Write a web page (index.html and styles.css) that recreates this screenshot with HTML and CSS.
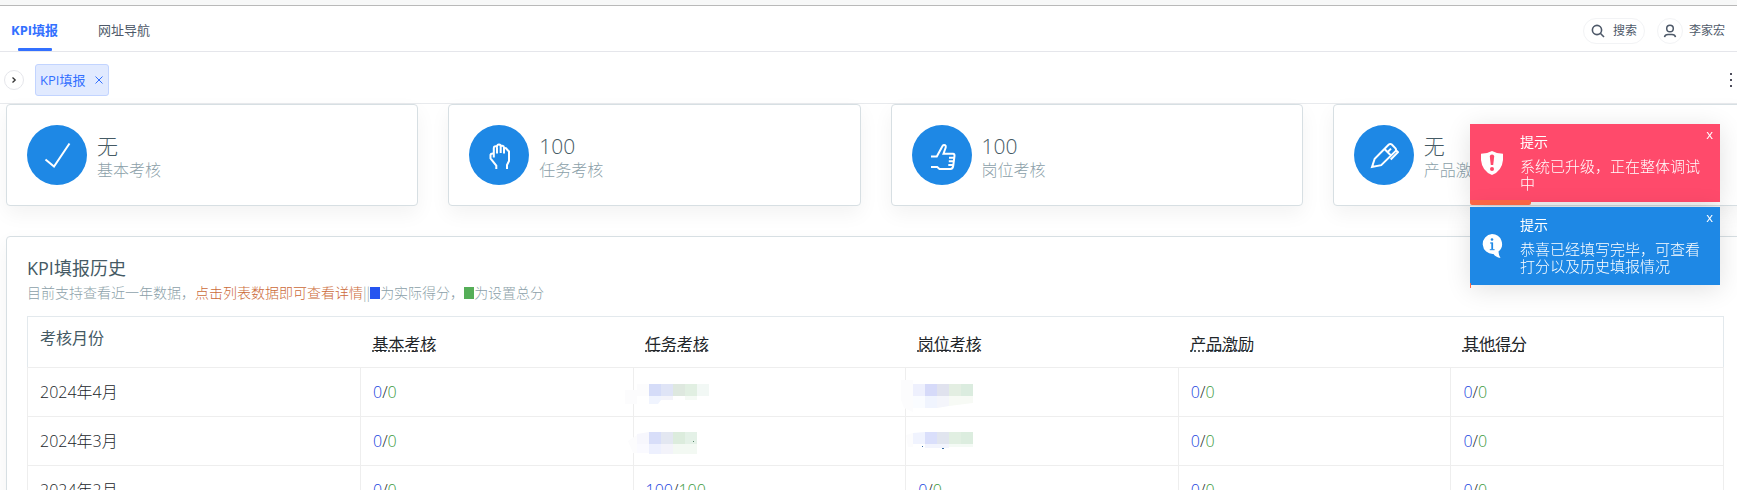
FILE: index.html
```html
<!DOCTYPE html>
<html lang="zh-CN">
<head>
    <meta charset="UTF-8">
    <meta name="viewport" content="width=device-width, initial-scale=1.0">
    <title>KPI填报</title>
    <link rel="stylesheet" href="styles.css">
</head>
<body>
    <div class="top-strip"></div>

    <header class="header">
        <nav class="nav">
            <a class="nav-link active" href="#">KPI填报</a>
            <a class="nav-link" href="#">网址导航</a>
        </nav>
        <div class="tools">
            <button class="search-button" type="button">
                <svg width="14" height="14" viewBox="0 0 14 14" fill="none" stroke="#4e5969" stroke-width="1.6"><circle cx="6" cy="6" r="4.6"/><path d="M9.3 9.3L13 13"/></svg>
                <span>搜索</span>
            </button>
            <button class="user-button" type="button">
                <span class="avatar">
                    <svg width="14" height="14" viewBox="0 0 14 14" fill="none" stroke="#4e5969" stroke-width="1.5"><circle cx="7" cy="4.5" r="3.3"/><path d="M1.5 13.200Q2 10.500 5 10.500H9Q12 10.500 12.500 13.200"/></svg>
                </span>
                <span class="user-name">李家宏</span>
            </button>
        </div>
    </header>

    <div class="tab-bar">
        <button class="expand-button" type="button" aria-label="展开">
            <svg width="6" height="8" viewBox="0 0 6 8" fill="none" stroke="#333" stroke-width="1.3"><path d="M1.5 1.500L4.200 4L1.500 6.500"/></svg>
        </button>
        <div class="tag">
            <a href="#">KPI填报</a>
            <button class="tag-close" type="button" aria-label="关闭">
                <svg width="8" height="8" viewBox="0 0 8 8" stroke="#3370ff" stroke-width="1"><path d="M.5.5l7 7M7.500.5l-7 7"/></svg>
            </button>
        </div>
        <button class="more-button" type="button" aria-label="更多">
            <svg width="4" height="16" viewBox="0 0 4 16" fill="#4e4e5c"><path d="M1 1h2v2H1zM1 7h2v2H1zM1 13h2v2H1z"/></svg>
        </button>
    </div>

    <main class="content">
        <section class="cards">
            <div class="card stat">
                <span class="stat-icon">
                    <svg width="30" height="30" viewBox="0 0 30 30" fill="none" stroke="#fff" stroke-width="2"><path d="M3.500 19.500L12 26.500L27.500 3.500"/></svg>
                </span>
                <div>
                    <div class="stat-value">无</div>
                    <div class="stat-label">基本考核</div>
                </div>
            </div>
            <div class="card stat">
                <span class="stat-icon">
                    <svg width="30" height="30" viewBox="0 0 30 30" fill="none" stroke="#fff" stroke-width="2"><path d="M12.300 29V25.500L6.500 18.500V14.800Q6.800 13.200 9.800 13.600V17.500M9.800 14V8Q10 6 12 6.300Q13 6.500 13 8V13.500M13 7V6Q13.500 4.500 15 4.600Q16.700 4.700 16.700 6.500V13M16.700 6.500Q17.200 5.400 18.500 5.700Q20 6 20 7.700V13.500M20 8Q22.500 7.500 23 9.500L25 11.500V21L23 25V29"/></svg>
                </span>
                <div>
                    <div class="stat-value">100</div>
                    <div class="stat-label">任务考核</div>
                </div>
            </div>
            <div class="card stat">
                <span class="stat-icon">
                    <svg width="30" height="30" viewBox="0 0 30 30" fill="none" stroke="#fff" stroke-width="2"><path d="M4 16.500H9.800L15.500 6Q16.500 4.500 18 5.200Q19.200 6 18.700 7.500L16.500 13.700H26Q27.700 14 27.500 15.800L26.200 26Q25.800 28.800 23.500 28.900H12.500L10.200 27H4M22 17.700H27M21.800 21.300H26.500M21.300 25H26"/></svg>
                </span>
                <div>
                    <div class="stat-value">100</div>
                    <div class="stat-label">岗位考核</div>
                </div>
            </div>
            <div class="card stat">
                <span class="stat-icon">
                    <svg width="30" height="30" viewBox="0 0 30 30" fill="none" stroke="#fff" stroke-width="2"><path d="M3 27L5.700 18.700L19.800 4.600Q21.300 3.300 22.800 4.600L26.500 8.300Q27.600 9.700 26.500 11.200L12.200 25.200ZM15.500 9L22.200 15.700M18.200 12.500L22 8.600M27 10.200L29 12.200L21.700 19.500"/></svg>
                </span>
                <div>
                    <div class="stat-value">无</div>
                    <div class="stat-label">产品激励</div>
                </div>
            </div>
        </section>

        <section class="card history">
            <h1>KPI填报历史</h1>
            <p class="note">目前支持查看近一年数据，<span class="note-warn">点击列表数据即可查看详情</span>||<i class="swatch swatch-blue"></i>为实际得分，<i class="swatch swatch-green"></i>为设置总分</p>
            <table class="history-table">
                <thead>
                    <tr>
                        <th class="month" scope="col">考核月份</th>
                        <th scope="col"><abbr title="基本考核">基本考核</abbr></th>
                        <th scope="col"><abbr title="任务考核">任务考核</abbr></th>
                        <th scope="col"><abbr title="岗位考核">岗位考核</abbr></th>
                        <th scope="col"><abbr title="产品激励">产品激励</abbr></th>
                        <th scope="col"><abbr title="其他得分">其他得分</abbr></th>
                    </tr>
                </thead>
                <tbody>
                    <tr>
                        <td>2024年4月</td>
                        <td><span class="real">0</span>/<span class="total">0</span></td>
                        <td>
                            <svg class="mosaic" width="84" height="32" viewBox="0 0 84 32"><path fill="#fcfcfd" d="M0 10h12V4h12v12H12v8H0z"/><path fill="#d5dcf8" d="M24 4h12v12H24z"/><path fill="#dfe4f6" d="M36 4h12v12H36z"/><path fill="#dee8df" d="M48 4h12v12H48z"/><path fill="#e1efe2" d="M60 4h12v12H60z"/><path fill="#f2f8f5" d="M72 4h12v12H72z"/><path fill="#f0f4fe" d="M24 16h12v4l-3 4h-9z"/><path fill="#f4f4fa" d="M36 16h12v4H36z"/><path fill="#f5faf5" d="M60 16h12v4H60z"/></svg>
                        </td>
                        <td>
                            <svg class="mosaic" width="84" height="32" viewBox="-4 0 84 32"><path fill="#fcfcfd" d="M0 0h12v32L3 28 0 20z"/><path fill="#eef0fd" d="M12 4h12v12H12z"/><path fill="#d6daf9" d="M24 4h12v12H24z"/><path fill="#e0e2ee" d="M36 4h12v12H36z"/><path fill="#e3eee2" d="M48 4h12v12H48z"/><path fill="#dbecdf" d="M60 4h12v12H60z"/><path fill="#fafcff" d="M12 16h12v12H12z"/><path fill="#f0f4fe" d="M24 16h12v12H24z"/><path fill="#f4f5fb" d="M36 16h12v10l-12 2z"/><path fill="#f7faf5" d="M48 16h24v7l-24 3z"/></svg>
                        </td>
                        <td><span class="real">0</span>/<span class="total">0</span></td>
                        <td><span class="real">0</span>/<span class="total">0</span></td>
                    </tr>
                    <tr>
                        <td>2024年3月</td>
                        <td><span class="real">0</span>/<span class="total">0</span></td>
                        <td>
                            <svg class="mosaic" width="84" height="32" viewBox="0 0 84 32"><path fill="#fcfcfd" d="M3 12l9-6v18h-4z"/><path fill="#f7f7fd" d="M12 5l12-2v12H12z"/><path fill="#d8def9" d="M24 3h12v12H24z"/><path fill="#e3e7f1" d="M36 3h12v12H36z"/><path fill="#dcecdd" d="M48 3h12v12H48z"/><path fill="#e4f1e7" d="M60 3h12v12H60z"/><path fill="#fafaff" d="M12 15h12v9H12z"/><path fill="#edf0fe" d="M24 15h12v10H24z"/><path fill="#f3f3fa" d="M36 15h12v10H36z"/><path fill="#f3f9f3" d="M48 15h24v10H48z"/><path fill="#57876b" d="M68 12h1v1h-1z"/></svg>
                        </td>
                        <td>
                            <svg class="mosaic" width="84" height="32" viewBox="-4 0 84 32"><path fill="#fcfcfd" d="M5 6l7-2v14H7z"/><path fill="#f0f3fe" d="M12 4l12-1v12H12z"/><path fill="#dadffb" d="M24 3h12v12H24z"/><path fill="#e1e5ef" d="M36 3h12v12H36z"/><path fill="#e1efe2" d="M48 3h12v12H48z"/><path fill="#dceddf" d="M60 3h12v12H60z"/><path fill="#f2f4fd" d="M24 15h24v4H24z"/><path fill="#f4faf5" d="M48 15h24v3H48z"/><path fill="#3569a7" d="M21 17h1v1h-1zM41 19h2v1h-2z"/></svg>
                        </td>
                        <td><span class="real">0</span>/<span class="total">0</span></td>
                        <td><span class="real">0</span>/<span class="total">0</span></td>
                    </tr>
                    <tr>
                        <td>2024年2月</td>
                        <td><span class="real">0</span>/<span class="total">0</span></td>
                        <td><span class="real">100</span>/<span class="total">100</span></td>
                        <td><span class="real">0</span>/<span class="total">0</span></td>
                        <td><span class="real">0</span>/<span class="total">0</span></td>
                        <td><span class="real">0</span>/<span class="total">0</span></td>
                    </tr>
                </tbody>
            </table>
        </section>
    </main>

    <div class="toasts">
        <div class="toast toast-danger" role="alert">
            <svg class="toast-icon" width="22" height="24" viewBox="0 0 22 24"><path fill="#fff" d="M11 0Q15.500 2.700 22 2.700V9Q21 20 11 24Q1 20 0 9V2.700Q6.500 2.700 11 0Z"/><path fill="#ff4a6b" d="M8.800 5.500Q8.800 3.500 11 3.500T13.200 5.500L12.200 14H9.800Z"/><circle cx="11" cy="18" r="2" fill="#ff4a6b"/></svg>
            <div class="toast-body">
                <strong>提示</strong>
                <p>系统已升级，正在整体调试中</p>
            </div>
            <button class="toast-close" type="button" aria-label="关闭">x</button>
            <div class="toast-progress" style="width: 61px"></div>
        </div>
        <div class="toast toast-info" role="alert">
            <svg class="toast-icon" width="22" height="24" viewBox="0 0 22 24"><path fill="#fff" d="M11 0A10 10 0 0 1 17.500 17.600Q17.500 21 19.500 24Q14.500 23 12.500 20A10 10 0 1 1 11 0Z"/><circle cx="11" cy="5.500" r="1.300" fill="#1e88e5"/><path fill="none" stroke="#1e88e5" stroke-width="1.800" d="M11.200 8.500V15.500"/><path fill="none" stroke="#1e88e5" stroke-width="1" d="M9 9H11.500M8.800 15.700H13.600"/></svg>
            <div class="toast-body">
                <strong>提示</strong>
                <p>恭喜已经填写完毕，可查看打分以及历史填报情况</p>
            </div>
            <button class="toast-close" type="button" aria-label="关闭">x</button>
            <div class="toast-progress" style="width: 1px"></div>
        </div>
    </div>
</body>
</html>
```
FILE: styles.css
```css
* {
    box-sizing: border-box;
}
html {
    height: 100%;
    overflow: hidden;
}
body {
    margin: 0;
    height: 100%;
    overflow: hidden;
    font-family: "Open Sans", "Noto Sans CJK SC", sans-serif;
    font-size: 16px;
    font-weight: 300;
    line-height: 20px;
    color: #212529;
    background: #fff;
}
button {
    font: inherit;
    color: inherit;
    background: none;
    border: 0;
    padding: 0;
    cursor: pointer;
}
a {
    color: inherit;
    text-decoration: none;
}
svg {
    display: block;
    flex: none;
}
.top-strip {
    height: 6px;
    background: #f7f8f8;
    border-bottom: 1px solid #b9b9b9;
}

/* 顶部导航 */
.header {
    display: flex;
    justify-content: space-between;
    height: 46px;
    padding: 0 12px 0 11px;
    border-bottom: 1px solid #e5e6eb;
    font-size: 13px;
    font-weight: 400;
    color: #4e5969;
}
.nav {
    display: flex;
    gap: 40px;
}
.nav-link {
    display: flex;
    flex-direction: column;
    align-items: center;
    padding-top: 14px;
}
.nav-link.active {
    color: #3370ff;
    font-weight: 700;
}
.nav-link.active::after {
    content: "";
    width: 34px;
    height: 3px;
    margin-top: auto;
    background: #3370ff;
    border-radius: 1px;
}
.tools {
    display: flex;
    align-items: center;
    gap: 12px;
    padding-top: 4px;
    font-size: 12px;
}
.search-button {
    display: flex;
    align-items: center;
    gap: 8px;
    height: 26px;
    padding: 0 7px;
    border: 1px solid #f2f3f5;
    border-radius: 13px;
}
.user-button {
    display: flex;
    align-items: center;
    gap: 6px;
}
.avatar {
    display: flex;
    align-items: center;
    justify-content: center;
    width: 26px;
    height: 26px;
    border: 1px solid #f2f3f5;
    border-radius: 50%;
}

/* 标签栏 */
.tab-bar {
    display: flex;
    align-items: center;
    height: 52px;
    padding: 4px 4px 0 4px;
    border-bottom: 1px solid #e8eaed;
    font-size: 13px;
    font-weight: 400;
}
.expand-button {
    display: flex;
    align-items: center;
    justify-content: center;
    width: 20px;
    height: 20px;
    border: 1px solid #e5e6eb;
    border-radius: 50%;
}
.tag {
    display: flex;
    align-items: center;
    gap: 10px;
    height: 32px;
    margin-left: 11px;
    padding: 0 5px 0 4px;
    color: #3370ff;
    background: #e1eaff;
    border: 1px solid #c2d4ff;
    border-radius: 3px;
}
.more-button {
    margin-left: auto;
}

/* 内容 */
.content {
    margin: 0 -8px 0 6px;
}
.card {
    background: #fff;
    border: 1px solid #d7dfe3;
    border-radius: 4px;
    padding: 20px;
    box-shadow: 0 8px 20px rgba(0, 0, 0, .05);
}
.cards {
    display: grid;
    grid-template-columns: repeat(4, 1fr);
    gap: 30px;
    margin-bottom: 30px;
}
.stat {
    display: flex;
    gap: 10px;
}
.stat-icon {
    display: flex;
    align-items: center;
    justify-content: center;
    width: 60px;
    height: 60px;
    border-radius: 50%;
    background: #1e88e5;
}
.stat-value {
    padding-top: 9px;
    font-size: 21px;
    line-height: 24px;
    color: #455a64;
}
.stat-label {
    line-height: 24px;
    color: #8c9fa9;
}
.history h1 {
    margin: 0 0 3px;
    font-size: 18px;
    font-weight: 400;
    line-height: 22px;
    color: #455a64;
}
.note {
    margin: 0 0 14px;
    font-family: "Noto Sans CJK SC", sans-serif;
    font-size: 14px;
    color: #8c9fa9;
}
.note-warn {
    color: #cc6a38;
}
.swatch {
    display: inline-block;
    width: 10px;
    height: 12px;
    vertical-align: -1px;
}
.swatch-blue {
    background: #2554f0;
}
.swatch-green {
    background: #55ae58;
}

.history-table {
    width: 100%;
    table-layout: fixed;
    border-collapse: collapse;
    border: 1px solid #e3e9ed;
}
.history-table th,
.history-table td {
    padding: 12px;
    text-align: left;
}
.history-table th {
    height: 51px;
    padding-bottom: 13px;
    font-weight: 400;
    vertical-align: bottom;
}
.history-table .month {
    width: 333px;
    padding-top: 11px;
    vertical-align: top;
    color: #455a64;
}
.history-table td {
    position: relative;
    height: 49px;
    border: 1px solid #eee;
}
.history-table abbr {
    text-decoration: underline dotted;
}
.real {
    color: #1a45e0;
}
.total {
    color: #3d9a41;
}
.mosaic {
    position: absolute;
    left: -9px;
    top: 12px;
}

/* 提示框 */
.toasts {
    position: fixed;
    top: 124px;
    right: 17px;
    display: flex;
    flex-direction: column;
    gap: 5px;
    width: 250px;
    color: #fff;
}
.toast {
    position: relative;
    display: flex;
    gap: 17px;
    min-height: 78px;
    padding: 9px 20px 0 11px;
    box-shadow: 0 4px 24px rgba(0, 0, 0, .12);
}
.toast-danger {
    background: #ff4a6b;
}
.toast-info {
    background: #1e88e5;
}
.toast-icon {
    margin-top: 18px;
}
.toast-body strong {
    display: block;
    font-size: 14px;
    font-weight: 400;
    line-height: 18px;
}
.toast-body p {
    margin: 7px 0 0;
    font-size: 15px;
    line-height: 17px;
}
.toast-close {
    position: absolute;
    top: 0;
    right: 7px;
    font-size: 13px;
    font-weight: 400;
}
.toast-progress {
    position: absolute;
    left: 0;
    bottom: -3px;
    height: 5px;
    background: #ff6847;
    border-radius: 0 2px 2px 2px;
}
```
